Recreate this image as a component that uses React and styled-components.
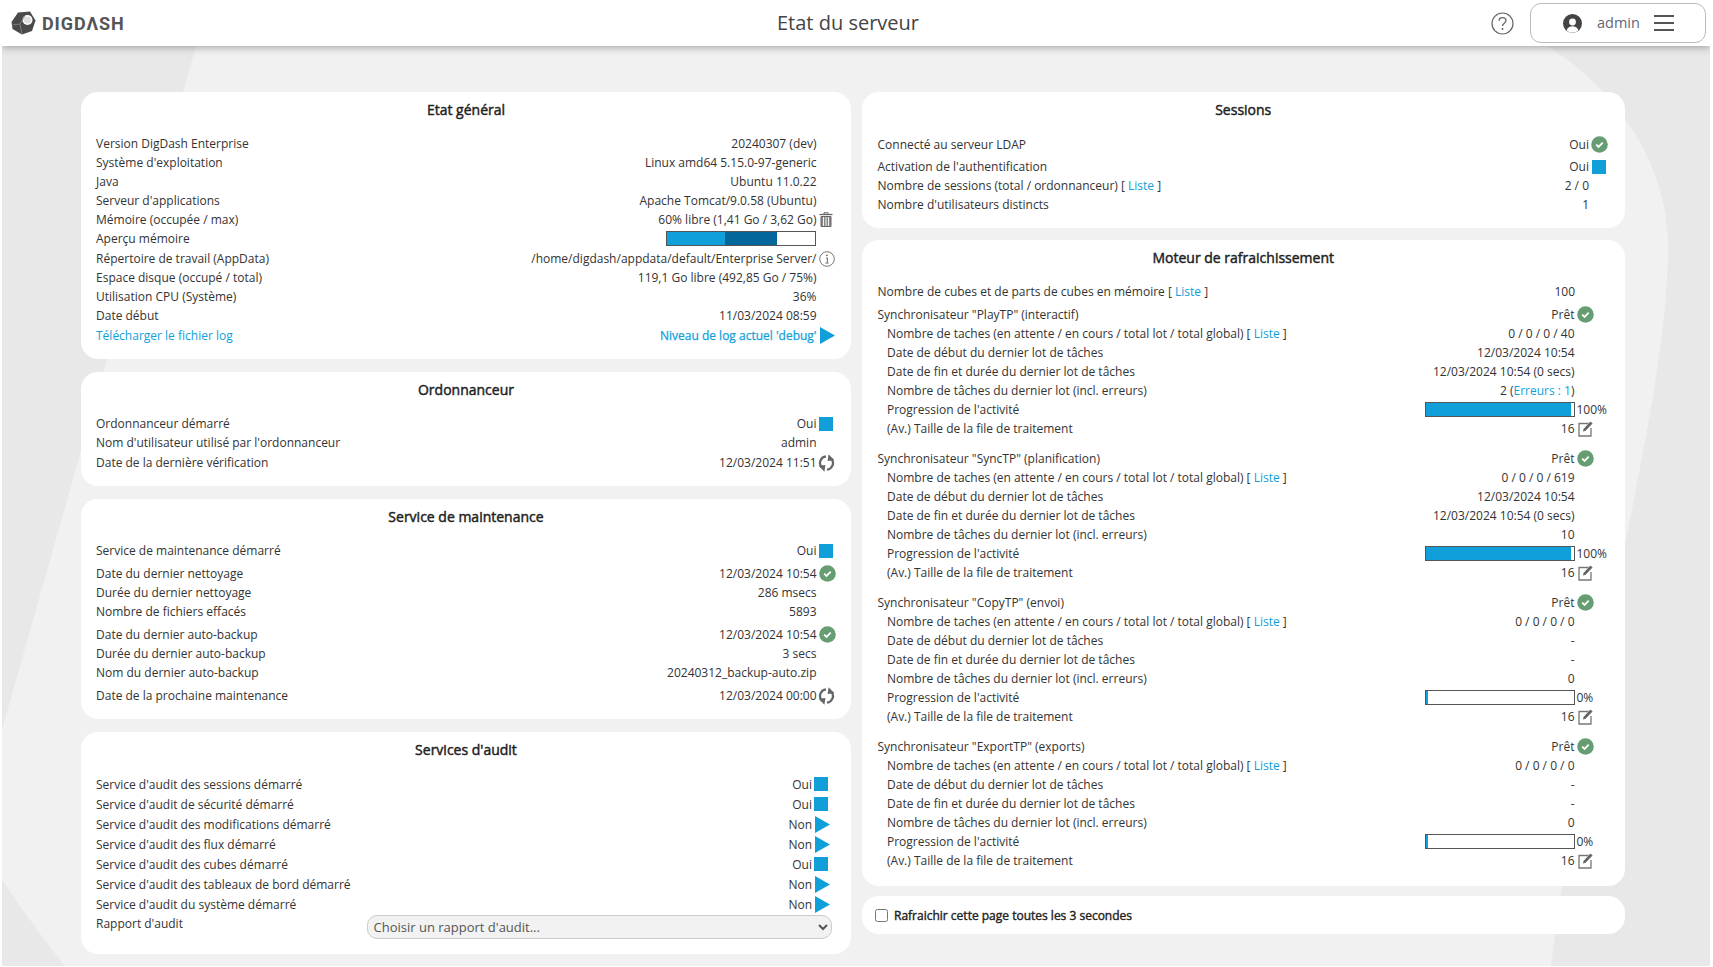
import React from "react";
import styled, { createGlobalStyle } from "styled-components";

const Global = createGlobalStyle`
  html, body { margin: 0; padding: 0; background: #fff; }
  body { font-family: "Open Sans", "Liberation Sans", sans-serif; font-size: 12px; color: #333; }
`;

const Page = styled.div`
  position: relative;
  width: 1708px;
  height: 966px;
  margin-left: 2px;
  background: #e8e8e8;
  overflow: hidden;
`;
const BgShape = styled.svg`
  position: absolute;
  left: 0;
  top: 0;
  width: 1708px;
  height: 966px;
`;
const Header = styled.header`
  position: relative;
  height: 46px;
  background: #fff;
  box-shadow: 0 1px 8px rgba(0, 0, 0, 0.35);
  display: flex;
  align-items: center;
  padding: 0 4px 0 9px;
  box-sizing: border-box;
`;
const Logo = styled.div`
  display: flex;
  align-items: center;
  gap: 6px;
  width: 732px;
`;
const LogoText = styled.span`
  font-family: "Roboto", sans-serif;
  font-weight: 700;
  font-size: 18px;
  letter-spacing: 0.9px;
  color: #555;
`;
const PageTitle = styled.h1`
  margin: 0 0 2px;
  font-size: 20px;
  font-weight: 400;
  color: #444;
  width: 210px;
  text-align: center;
`;
const HeaderRight = styled.div`
  margin-left: auto;
  display: flex;
  align-items: center;
  gap: 16px;
`;
const UserBox = styled.div`
  width: 176px;
  height: 40px;
  box-sizing: border-box;
  border: 1px solid #bbb;
  border-radius: 11px;
  display: flex;
  align-items: center;
  padding-left: 32px;
`;
const UserName = styled.span`
  font-size: 14.5px;
  color: #667;
  margin: 0 14px 2px 15px;
`;
const Burger = styled.div`
  width: 20px;
  height: 16px;
  border-top: 2px solid #555;
  border-bottom: 2px solid #555;
  box-sizing: border-box;
  position: relative;
  &::after {
    content: "";
    position: absolute;
    left: 0;
    right: 0;
    top: 5px;
    height: 2px;
    background: #555;
  }
`;
const Columns = styled.main`
  position: relative;
  display: grid;
  grid-template-columns: 770px 762.5px;
  column-gap: 11px;
  padding: 46px 0 0 79px;
`;
const Column = styled.div`
  --row-left: ${(p) => p.$rowLeft}px;
  display: flex;
  flex-direction: column;
`;
const Card = styled.section`
  background: #fff;
  border-radius: 17px;
  padding-bottom: ${(p) => p.$pb ?? 14}px;
  margin-bottom: ${(p) => p.$mb ?? 13}px;
`;
const CardTitle = styled.h2`
  margin: 0;
  height: 42px;
  padding-top: 8px;
  box-sizing: border-box;
  text-align: center;
  font-size: 14px;
  line-height: 19px;
  font-weight: 400;
  -webkit-text-stroke: 0.45px #222;
  color: #222;
`;
const Row = styled.div`
  display: flex;
  align-items: center;
  height: ${(p) => p.$h ?? 19}px;
  margin-top: ${(p) => p.$top ?? 0}px;
  padding-left: calc(var(--row-left) + ${(p) => p.$indent ?? 0}px);
  line-height: 19px;
  white-space: nowrap;
`;
const Label = styled.span`
  flex: 1;
`;
const Value = styled.span`
  text-align: right;
`;
const Slot = styled.span`
  width: ${(p) => p.$w}px;
  flex: none;
  display: flex;
  align-items: center;
  padding-left: ${(p) => p.$gap ?? 2}px;
  box-sizing: border-box;
`;
const Link = styled.a`
  color: #119fda;
  text-decoration: none;
`;
const StrongLink = styled(Link)`
  -webkit-text-stroke: 0.25px #119fda;
`;
const Square = styled.span`
  width: 14px;
  height: 14px;
  background: #119fda;
  display: block;
`;
const Bar = styled.div`
  width: 150px;
  height: 15px;
  box-sizing: border-box;
  border: 1px solid #555;
  background: #fff;
  display: flex;
`;
const Fill = styled.div`
  height: 100%;
  background: ${(p) => p.$c ?? "#119fda"};
`;
const Pct = styled.span`
  font-size: 12px;
`;
const AuditSelect = styled.select`
  width: 465px;
  height: 24px;
  margin: 6px 19.5px 0 0;
  box-sizing: border-box;
  border: 1px solid #ccc;
  border-radius: 10px;
  background: #f2f2f2;
  color: #555;
  font-family: inherit;
  font-size: 13px;
  padding: 0 2px;
`;
const RefreshRow = styled.label`
  display: flex;
  align-items: center;
  height: 38px;
  padding-left: 13px;
  gap: 6px;
  font-weight: 400;
  -webkit-text-stroke: 0.4px #222;
  color: #222;
`;
const Check = styled.input`
  width: 13px;
  height: 13px;
  margin: 0;
`;

const Ok = () => (
  <svg width="17" height="17" viewBox="0 0 17 17">
    <circle cx="8.5" cy="8.5" r="8.3" fill="#679d72" />
    <path d="M5.2 8.7l2.3 2.2 4.2-4.3" fill="none" stroke="#fff" strokeWidth="1.8" />
  </svg>
);
const Play = () => (
  <svg width="15" height="17" viewBox="0 0 15 17">
    <path d="M0 0L15 8.5L0 17Z" fill="#119fda" />
  </svg>
);
const Trash = () => (
  <svg width="14" height="15" viewBox="0 0 14 15" fill="none" stroke="#666">
    <path d="M0.5 2.5h13" strokeWidth="1.3" />
    <path d="M5 2.2V.8h4v1.4" />
    <path d="M2 4.5h10v10H2z" fill="#888" stroke="#666" />
    <path d="M4.5 5v9M7 5v9M9.5 5v9" stroke="#fff" strokeWidth="0.9" />
  </svg>
);
const Info = () => (
  <svg width="16" height="16" viewBox="0 0 16 16" fill="none">
    <circle cx="8" cy="8" r="7.3" stroke="#777" />
    <circle cx="8" cy="4.3" r="0.9" fill="#666" />
    <path d="M7 7h1.4v4.4" stroke="#666" />
    <path d="M6.3 12h3.4" stroke="#666" />
  </svg>
);
const Sync = () => (
  <svg width="17" height="18" viewBox="0 0 17 18" fill="none">
    <path d="M8 2.4A6.6 6.6 0 0 0 3.4 13" stroke="#666" strokeWidth="2.3" />
    <path d="M9 15.6A6.6 6.6 0 0 0 13.6 5" stroke="#666" strokeWidth="2.3" />
    <path d="M0.6 11.8L7.4 11L6.4 17.8Z" fill="#666" />
    <path d="M16.4 6.2L9.6 7L10.6 0.2Z" fill="#666" />
  </svg>
);
const Edit = () => (
  <svg width="16" height="17" viewBox="0 0 16 17" fill="none">
    <path d="M10.5 3.5H1v12.5h12V8" stroke="#777" strokeWidth="1.3" />
    <path d="M5 11.5l.5-2.6L12.4 1.5l2.2 1.9-7 7.3z" fill="#666" />
  </svg>
);
const Help = () => (
  <svg width="23" height="23" viewBox="0 0 23 23" fill="none">
    <circle cx="11.5" cy="11.5" r="10.5" stroke="#666" strokeWidth="1.2" />
    <path d="M8 8.8c0-2 1.6-3.2 3.5-3.2s3.5 1.2 3.5 3c0 2.6-3.5 2.6-3.5 5.4" stroke="#666" strokeWidth="1.3" />
    <circle cx="11.5" cy="17" r="1" fill="#666" />
  </svg>
);
const Avatar = () => (
  <svg width="19" height="19" viewBox="0 0 19 19">
    <circle cx="9.5" cy="9.5" r="9.5" fill="#444" />
    <circle cx="9.5" cy="8" r="3.4" fill="#fff" />
    <path d="M3.5 16.5c1-3 3.4-4.2 6-4.2s5 1.2 6 4.2a9 9 0 0 1-12 0z" fill="#fff" />
  </svg>
);
const LogoMark = () => (
  <svg width="25" height="24" viewBox="0 0 25 24">
    <path d="M7 1.5L19 0.5L24.5 9.5L21 20L11 23.5L1.5 18L0.5 11Z" fill="#4a4a4a" />
    <circle cx="16.5" cy="9" r="5" fill="#fff" />
    <circle cx="16.5" cy="9" r="3.6" fill="#ddd" />
    <path d="M11 23L9 13L1.5 14M9 13L14 5" stroke="#888" strokeWidth="0.8" fill="none" />
  </svg>
);

const TP = ({ name, tasks, start, end, count, pct, top }) => (
  <>
    <Row $top={top}>
      <Label>Synchronisateur "{name}</Label>
      <Value>Prêt</Value>
      <Slot $w={50}><Ok /></Slot>
    </Row>
    <Row $indent={9.5}>
      <Label>Nombre de taches (en attente / en cours / total lot / total global) [ <Link>Liste</Link> ]</Label>
      <Value>{tasks}</Value>
      <Slot $w={50} />
    </Row>
    <Row $indent={9.5}>
      <Label>Date de début du dernier lot de tâches</Label>
      <Value>{start}</Value>
      <Slot $w={50} />
    </Row>
    <Row $indent={9.5}>
      <Label>Date de fin et durée du dernier lot de tâches</Label>
      <Value>{end}</Value>
      <Slot $w={50} />
    </Row>
    <Row $indent={9.5}>
      <Label>Nombre de tâches du dernier lot (incl. erreurs)</Label>
      <Value>{count}</Value>
      <Slot $w={50} />
    </Row>
    <Row $indent={9.5}>
      <Label>Progression de l'activité</Label>
      <Bar><Fill style={{ width: pct ? "98.5%" : "2px" }} /></Bar>
      <Slot $w={50}><Pct>{pct ? "100%" : "0%"}</Pct></Slot>
    </Row>
    <Row $indent={9.5}>
      <Label>(Av.) Taille de la file de traitement</Label>
      <Value>16</Value>
      <Slot $w={50} $gap={3}><Edit /></Slot>
    </Row>
  </>
);

const general = [
  ["Version DigDash Enterprise", "20240307 (dev)"],
  ["Système d'exploitation", "Linux amd64 5.15.0-97-generic"],
  ["Java", "Ubuntu 11.0.22"],
  ["Serveur d'applications", "Apache Tomcat/9.0.58 (Ubuntu)"],
];

const audit = [
  ["Service d'audit des sessions démarré", "Oui"],
  ["Service d'audit de sécurité démarré", "Oui"],
  ["Service d'audit des modifications démarré", "Non"],
  ["Service d'audit des flux démarré", "Non"],
  ["Service d'audit des cubes démarré", "Oui"],
  ["Service d'audit des tableaux de bord démarré", "Non"],
  ["Service d'audit du système démarré", "Non"],
];

export default function App() {
  return (
    <>
      <Global />
      <Page>
        <BgShape viewBox="0 0 1708 966">
          <path
            d="M194 46L1545 46C1610 85 1664 160 1666 240C1668 400 1590 640 1549 966L63 966C30 925 0 880 -20 850L-20 800Z"
            fill="#f1f1f1"
          />
        </BgShape>
        <Header>
          <Logo>
            <LogoMark />
            <LogoText>DIGDΛSH</LogoText>
          </Logo>
          <PageTitle>Etat du serveur</PageTitle>
          <HeaderRight>
            <Help />
            <UserBox>
              <Avatar />
              <UserName>admin</UserName>
              <Burger />
            </UserBox>
          </HeaderRight>
        </Header>
        <Columns>
          <Column $rowLeft={15}>
            <Card>
              <CardTitle>Etat général</CardTitle>
              {general.map(([a, b]) => (
                <Row key={a}>
                  <Label>{a}</Label>
                  <Value>{b}</Value>
                  <Slot $w={34.5} />
                </Row>
              ))}
              <Row>
                <Label>Mémoire (occupée / max)</Label>
                <Value>60% libre (1,41 Go / 3,62 Go)</Value>
                <Slot $w={34.5}><Trash /></Slot>
              </Row>
              <Row>
                <Label>Aperçu mémoire</Label>
                <Bar>
                  <Fill style={{ width: "39.5%" }} />
                  <Fill $c="#05669c" style={{ width: "35%" }} />
                </Bar>
                <Slot $w={35} />
              </Row>
              <Row $top={1}>
                <Label>Répertoire de travail (AppData)</Label>
                <Value>/home/digdash/appdata/default/Enterprise Server/</Value>
                <Slot $w={34.5}><Info /></Slot>
              </Row>
              <Row>
                <Label>Espace disque (occupé / total)</Label>
                <Value>119,1 Go libre (492,85 Go / 75%)</Value>
                <Slot $w={34.5} />
              </Row>
              <Row>
                <Label>Utilisation CPU (Système)</Label>
                <Value>36%</Value>
                <Slot $w={34.5} />
              </Row>
              <Row>
                <Label>Date début</Label>
                <Value>11/03/2024 08:59</Value>
                <Slot $w={34.5} />
              </Row>
              <Row $top={1}>
                <Label><Link>Télécharger le fichier log</Link></Label>
                <Value><StrongLink>Niveau de log actuel 'debug'</StrongLink></Value>
                <Slot $w={34.5} $gap={3}><Play /></Slot>
              </Row>
            </Card>
            <Card>
              <CardTitle>Ordonnanceur</CardTitle>
              <Row>
                <Label>Ordonnanceur démarré</Label>
                <Value>Oui</Value>
                <Slot $w={34.5}><Square /></Slot>
              </Row>
              <Row>
                <Label>Nom d'utilisateur utilisé par l'ordonnanceur</Label>
                <Value>admin</Value>
                <Slot $w={34.5} />
              </Row>
              <Row $top={1}>
                <Label>Date de la dernière vérification</Label>
                <Value>12/03/2024 11:51</Value>
                <Slot $w={34.5} $gap={1}><Sync /></Slot>
              </Row>
            </Card>
            <Card>
              <CardTitle>Service de maintenance</CardTitle>
              <Row>
                <Label>Service de maintenance démarré</Label>
                <Value>Oui</Value>
                <Slot $w={34.5}><Square /></Slot>
              </Row>
              <Row $top={4}>
                <Label>Date du dernier nettoyage</Label>
                <Value>12/03/2024 10:54</Value>
                <Slot $w={34.5}><Ok /></Slot>
              </Row>
              <Row>
                <Label>Durée du dernier nettoyage</Label>
                <Value>286 msecs</Value>
                <Slot $w={34.5} />
              </Row>
              <Row>
                <Label>Nombre de fichiers effacés</Label>
                <Value>5893</Value>
                <Slot $w={34.5} />
              </Row>
              <Row $top={4}>
                <Label>Date du dernier auto-backup</Label>
                <Value>12/03/2024 10:54</Value>
                <Slot $w={34.5}><Ok /></Slot>
              </Row>
              <Row>
                <Label>Durée du dernier auto-backup</Label>
                <Value>3 secs</Value>
                <Slot $w={34.5} />
              </Row>
              <Row>
                <Label>Nom du dernier auto-backup</Label>
                <Value>20240312_backup-auto.zip</Value>
                <Slot $w={34.5} />
              </Row>
              <Row $top={4}>
                <Label>Date de la prochaine maintenance</Label>
                <Value>12/03/2024 00:00</Value>
                <Slot $w={34.5} $gap={1}><Sync /></Slot>
              </Row>
            </Card>
            <Card $pb={21} $mb={0}>
              <CardTitle>Services d'audit</CardTitle>
              {audit.map(([a, b]) => (
                <Row key={a} $h={20}>
                  <Label>{a}</Label>
                  <Value>{b}</Value>
                  <Slot $w={39} $gap={b === "Oui" ? 2 : 3}>{b === "Oui" ? <Square /> : <Play />}</Slot>
                </Row>
              ))}
              <Row $h={19}>
                <Label>Rapport d'audit</Label>
                <AuditSelect defaultValue="">
                  <option value="">Choisir un rapport d'audit...</option>
                </AuditSelect>
              </Row>
            </Card>
          </Column>
          <Column $rowLeft={15.5}>
            <Card $mb={12}>
              <CardTitle>Sessions</CardTitle>
              <Row $top={1}>
                <Label>Connecté au serveur LDAP</Label>
                <Value>Oui</Value>
                <Slot $w={35.5}><Ok /></Slot>
              </Row>
              <Row $top={3}>
                <Label>Activation de l'authentification</Label>
                <Value>Oui</Value>
                <Slot $w={35.5} $gap={3}><Square /></Slot>
              </Row>
              <Row>
                <Label>Nombre de sessions (total / ordonnanceur) [ <Link>Liste</Link> ]</Label>
                <Value>2 / 0</Value>
                <Slot $w={35.5} />
              </Row>
              <Row>
                <Label>Nombre d'utilisateurs distincts</Label>
                <Value>1</Value>
                <Slot $w={35.5} />
              </Row>
            </Card>
            <Card $mb={10} $pb={16}>
              <CardTitle>Moteur de rafraichissement</CardTitle>
              <Row>
                <Label>Nombre de cubes et de parts de cubes en mémoire [ <Link>Liste</Link> ]</Label>
                <Value>100</Value>
                <Slot $w={49.5} />
              </Row>
              <TP top={4} name={'PlayTP" (interactif)'} tasks="0 / 0 / 0 / 40" start="12/03/2024 10:54"
                end="12/03/2024 10:54 (0 secs)"
                count={<>2 (<Link>Erreurs : 1</Link>)</>} pct />
              <TP top={11} name={'SyncTP" (planification)'} tasks="0 / 0 / 0 / 619" start="12/03/2024 10:54"
                end="12/03/2024 10:54 (0 secs)" count="10" pct />
              <TP top={11} name={'CopyTP" (envoi)'} tasks="0 / 0 / 0 / 0" start="-" end="-" count="0" />
              <TP top={11} name={'ExportTP" (exports)'} tasks="0 / 0 / 0 / 0" start="-" end="-" count="0" />
            </Card>
            <Card $pb={0} $mb={0}>
              <RefreshRow>
                <Check type="checkbox" />
                Rafraichir cette page toutes les 3 secondes
              </RefreshRow>
            </Card>
          </Column>
        </Columns>
      </Page>
    </>
  );
}
